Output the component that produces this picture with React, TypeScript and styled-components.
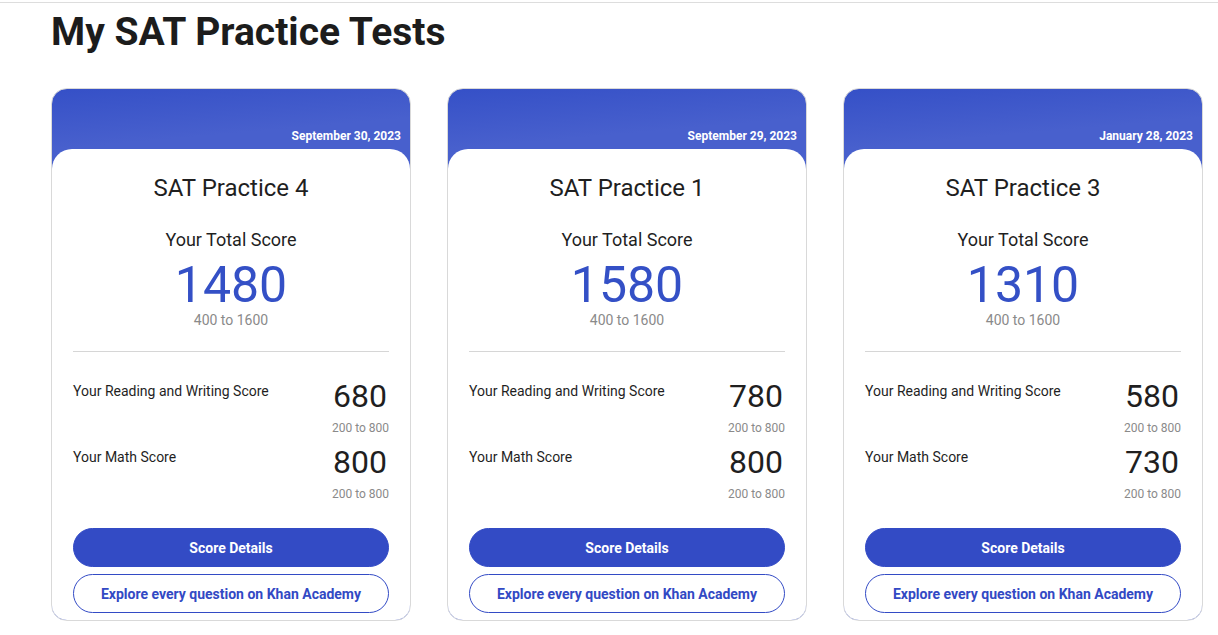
import styled, { createGlobalStyle } from 'styled-components'

const GlobalStyle = createGlobalStyle`
    body {
        margin: 0;
        padding-top: 2px;
        background: #ffffff;
        font-family: Roboto, "Liberation Sans", sans-serif;
        color: #1f1f1f;
    }
`
const Page = styled.div`
    border-top: 1px solid #dddddd;
    padding: 0 51px;
`
const Title = styled.h1`
    margin: 6px 0 0 0;
    font-size: 39px;
    font-weight: 700;
    line-height: 46px;
    color: #1c1c1c;
`
const CardRow = styled.div`
    display: grid;
    grid-template-columns: repeat(3, 360px);
    gap: 36px;
    margin-top: 33px;
`
const Card = styled.div`
    border: 1px solid #d9d9d9;
    border-radius: 16px;
    overflow: hidden;
    background: linear-gradient(175deg, #3550c7 0%, #4860cd 60px);
    display: flex;
    flex-direction: column;
`
const CardHeader = styled.div`
    height: 60px;
    display: flex;
    align-items: flex-end;
    justify-content: flex-end;
    padding: 0 9px 6px 0;
    box-sizing: border-box;
    color: #ffffff;
    font-size: 12px;
    font-weight: 700;
`
const CardBody = styled.div`
    background: #ffffff;
    border-radius: 20px 20px 0 0;
    padding: 24px 21px 7px 21px;
    display: flex;
    flex-direction: column;
`
const TestName = styled.div`
    text-align: center;
    font-size: 24px;
    line-height: 30px;
    color: #1f1f1f;
`
const TotalBlock = styled.div`
    text-align: center;
    margin-top: 25px;
    padding-bottom: 22px;
    border-bottom: 1px solid #d6d6d6;
`
const TotalLabel = styled.div`
    font-size: 18px;
    line-height: 24px;
`
const TotalValue = styled.div`
    font-size: 50px;
    line-height: 52px;
    color: #3450c6;
    margin-top: 7px;
`
const Range = styled.div<{ $small?: boolean }>`
    font-size: ${p => (p.$small ? '12px' : '14px')};
    line-height: ${p => (p.$small ? '16px' : '18px')};
    color: #8a8a8a;
`
const SectionList = styled.div`
    display: flex;
    flex-direction: column;
    gap: 11px;
    margin-top: 29px;
`
const SectionRow = styled.div`
    display: flex;
    justify-content: space-between;
    align-items: flex-start;
`
const SectionLabel = styled.div`
    font-size: 14px;
    line-height: 20px;
    color: #1f1f1f;
`
const SectionScore = styled.div`
    text-align: right;
    margin-top: -3px;
`
const SectionValue = styled.div`
    font-size: 32px;
    line-height: 36px;
    color: #1f1f1f;
    margin-right: 2px;
`
const SectionRange = styled(Range)`
    margin-top: 6px;
`
const Buttons = styled.div`
    display: flex;
    flex-direction: column;
    gap: 7px;
    margin-top: 26px;
`
const Button = styled.button<{ $outline?: boolean }>`
    height: 39px;
    border-radius: 20px;
    font-family: Roboto, "Liberation Sans", sans-serif;
    font-size: 14px;
    font-weight: 700;
    cursor: pointer;
    border: 1px solid #334bc5;
    background: ${p => (p.$outline ? '#ffffff' : '#334bc5')};
    color: ${p => (p.$outline ? '#3249c4' : '#ffffff')};
`

type Test = {
    date: string
    name: string
    total: number
    reading: number
    math: number
}

const tests: Test[] = [
    { date: 'September 30, 2023', name: 'SAT Practice 4', total: 1480, reading: 680, math: 800 },
    { date: 'September 29, 2023', name: 'SAT Practice 1', total: 1580, reading: 780, math: 800 },
    { date: 'January 28, 2023', name: 'SAT Practice 3', total: 1310, reading: 580, math: 730 },
]

function TestCard({ test }: { test: Test }) {
    return (
        <Card>
            <CardHeader>{test.date}</CardHeader>
            <CardBody>
                <TestName>{test.name}</TestName>
                <TotalBlock>
                    <TotalLabel>Your Total Score</TotalLabel>
                    <TotalValue>{test.total}</TotalValue>
                    <Range>400 to 1600</Range>
                </TotalBlock>
                <SectionList>
                    <SectionRow>
                        <SectionLabel>Your Reading and Writing Score</SectionLabel>
                        <SectionScore>
                            <SectionValue>{test.reading}</SectionValue>
                            <SectionRange $small>200 to 800</SectionRange>
                        </SectionScore>
                    </SectionRow>
                    <SectionRow>
                        <SectionLabel>Your Math Score</SectionLabel>
                        <SectionScore>
                            <SectionValue>{test.math}</SectionValue>
                            <SectionRange $small>200 to 800</SectionRange>
                        </SectionScore>
                    </SectionRow>
                </SectionList>
                <Buttons>
                    <Button>Score Details</Button>
                    <Button $outline>Explore every question on Khan Academy</Button>
                </Buttons>
            </CardBody>
        </Card>
    )
}

export default function App() {
    return (
        <>
            <GlobalStyle />
            <Page>
                <Title>My SAT Practice Tests</Title>
                <CardRow>
                    {tests.map(t => (
                        <TestCard key={t.name} test={t} />
                    ))}
                </CardRow>
            </Page>
        </>
    )
}
